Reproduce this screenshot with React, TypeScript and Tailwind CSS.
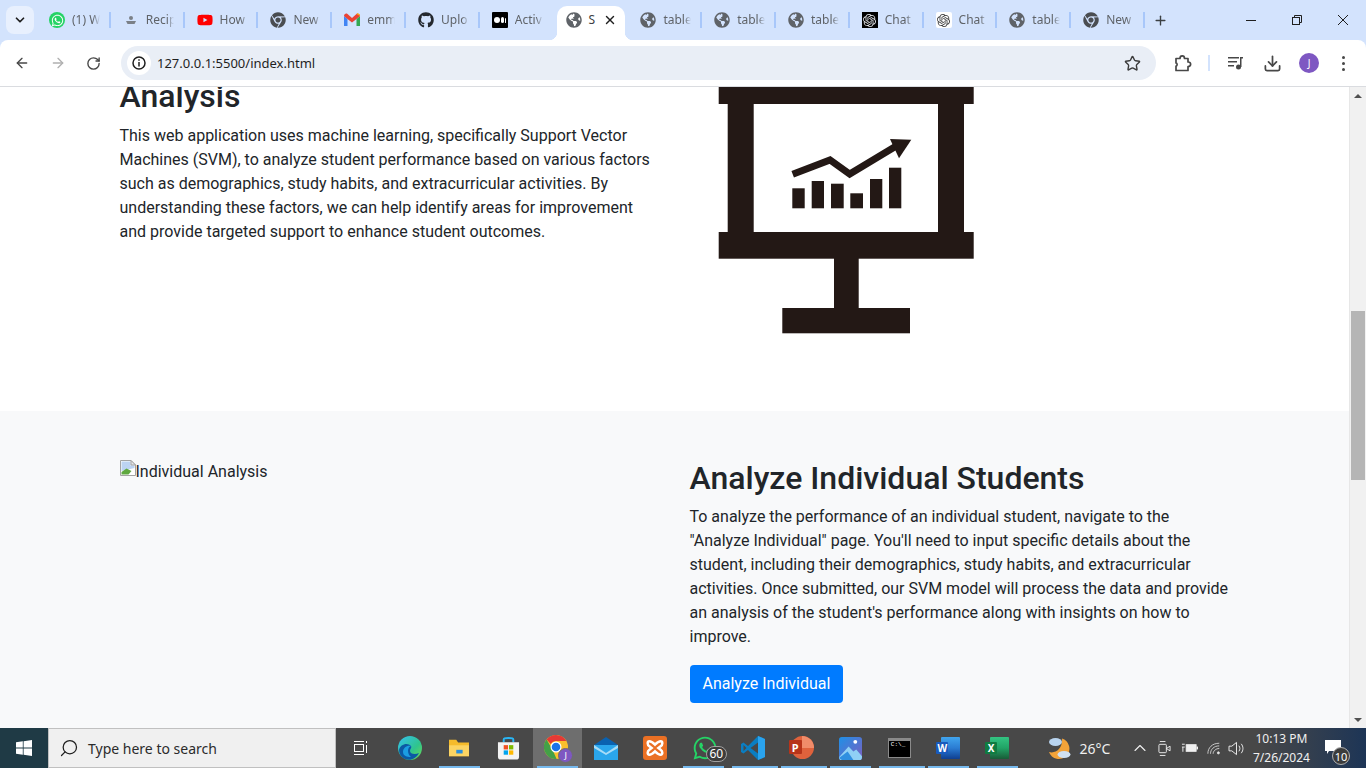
import * as React from 'react';
import { ArrowLeft, ArrowRight, RotateCw, Star, Download, Plus, X, ChevronDown, ChevronUp, Search } from 'lucide-react';
import { FaWhatsapp, FaChrome, FaGithub, FaYoutube, FaGlobeAmericas } from 'react-icons/fa';
import { SiOpenai } from 'react-icons/si';

const GmailIcon = () => (
  <svg viewBox="0 0 16 14" className="w-4 h-[14px]">
    <path d="M0 3v10h3.500V6z" fill="#4285f4" />
    <path d="M12.500 6v7H16V3z" fill="#34a853" />
    <path d="M0 3l3.500 3L8 9.500 12.500 6 16 3c0-2-2-3-3.500-2L8 5 3.500 1C2 0 0 1 0 3z" fill="#ea4335" />
    <path d="M12.500 1L16 3c0-2-2-3-3.500-2z" fill="#fbbc04" />
  </svg>
);

const RecipeIcon = () => (
  <svg viewBox="0 0 16 16" className="w-4 h-4">
    <circle cx="8" cy="6" r="2" fill="#7b8087" />
    <path d="M3 9h10l-1.500 3h-7z" fill="#7b8087" />
  </svg>
);

const WhatsappFavicon = () => (
  <span className="w-4 h-4 rounded-full bg-[#25d366] flex items-center justify-center">
    <FaWhatsapp className="w-[13px] h-[13px] text-white" />
  </span>
);

const MediumTile = () => (
  <span className="w-4 h-4 bg-black rounded-[1px] flex items-center justify-center gap-[1px]">
    <span className="w-[6px] h-[6px] rounded-full bg-white" />
    <span className="w-[3px] h-[6px] rounded-full bg-white" />
    <span className="w-[1px] h-[5px] rounded-full bg-white" />
  </span>
);

const OpenAiDark = () => (
  <span className="w-4 h-4 bg-black flex items-center justify-center">
    <SiOpenai className="w-[13px] h-[13px] text-[#e5e7eb]" />
  </span>
);

const OpenAiLight = () => (
  <span className="w-4 h-4 bg-white rounded-[2px] flex items-center justify-center">
    <SiOpenai className="w-[13px] h-[13px] text-[#3c3c3c]" />
  </span>
);

const Globe = () => <FaGlobeAmericas className="w-4 h-4 text-[#5f6368]" />;
const ChromeGrey = () => <FaChrome className="w-4 h-4 text-[#4a4d51]" />;

const TABS_LEFT = [
  { icon: <WhatsappFavicon />, title: '(1) W' },
  { icon: <RecipeIcon />, title: 'Recip' },
  { icon: <FaYoutube className="w-4 h-4 text-[#ff0000]" />, title: 'How' },
  { icon: <ChromeGrey />, title: 'New' },
  { icon: <GmailIcon />, title: 'emm' },
  { icon: <FaGithub className="w-4 h-4 text-[#24292f]" />, title: 'Uplo' },
  { icon: <MediumTile />, title: 'Activ', last: true },
];

const TABS_RIGHT = [
  { icon: <Globe />, title: 'table' },
  { icon: <Globe />, title: 'table' },
  { icon: <Globe />, title: 'table' },
  { icon: <OpenAiDark />, title: 'Chat' },
  { icon: <OpenAiLight />, title: 'Chat' },
  { icon: <Globe />, title: 'table' },
  { icon: <ChromeGrey />, title: 'New' },
];

function Tab({ icon, title, last }: { icon: React.ReactNode; title: string; last?: boolean }) {
  return (
    <div className="w-[73.8px] h-[30px] mt-[5px] flex items-center pl-[12px] shrink-0">
      <span className="w-4 h-4 flex items-center justify-center shrink-0">{icon}</span>
      <span className="ml-[7px] w-[28px] overflow-hidden whitespace-nowrap text-[12px] leading-[16px] text-[#5f6368] [mask-image:linear-gradient(to_right,black_75%,transparent)]">
        {title}
      </span>
      {!last && <span className="ml-auto w-[2px] h-[16px] bg-[#a8c7fa]" />}
    </div>
  );
}

function ActiveTab() {
  return (
    <div className="relative w-[74.8px] h-[34px] mt-[6px] px-[3px] shrink-0">
      <span className="absolute left-[-5px] bottom-0 w-2 h-2 bg-[radial-gradient(circle_at_0_0,transparent_8px,white_8.5px)]" />
      <span className="absolute right-[-5px] bottom-0 w-2 h-2 bg-[radial-gradient(circle_at_100%_0,transparent_8px,white_8.5px)]" />
      <div className="h-full bg-white rounded-t-[10px] flex items-center pl-[9px] pb-[6px]">
        <FaGlobeAmericas className="w-4 h-4 text-[#5f6368] shrink-0" />
        <span className="ml-[7px] w-[7px] text-[12px] leading-[16px] text-[#3c4043]">S</span>
        <X className="ml-[7px] w-[14px] h-[14px] text-[#1f1f1f]" strokeWidth={2.5} />
      </div>
    </div>
  );
}

function TabStrip() {
  return (
    <div className="h-[40px] bg-[#d3e3fd] flex pl-[6px] font-['Noto_Sans',sans-serif]">
      <div className="w-[28px] h-[28px] mt-[6px] mr-[3px] rounded-lg bg-[#e8f0fe] flex items-center justify-center">
        <ChevronDown className="w-[14px] h-[14px] text-[#1f1f1f]" strokeWidth={3} />
      </div>
      {TABS_LEFT.map((t, i) => (
        <Tab key={i} icon={t.icon} title={t.title} last={t.last} />
      ))}
      <ActiveTab />
      {TABS_RIGHT.map((t, i) => (
        <Tab key={i} icon={t.icon} title={t.title} />
      ))}
      <div className="ml-[8px] mt-[12px] w-4 h-4 flex items-center justify-center">
        <Plus className="w-[15px] h-[15px] text-[#3c4043]" strokeWidth={2.2} />
      </div>
      <div className="ml-auto flex h-[40px] text-[#1f1f1f]">
        <div className="w-[46px] flex items-center justify-center">
          <span className="w-[10px] h-px bg-[#1f1f1f]" />
        </div>
        <div className="w-[46px] flex items-center justify-center">
          <svg viewBox="0 0 10 10" className="w-[10px] h-[10px]" fill="none" stroke="#1f1f1f">
            <rect x="0.500" y="2.500" width="7" height="7" />
            <path d="M2.500 2.500V.5h7v7H7.500" />
          </svg>
        </div>
        <div className="w-[46px] flex items-center justify-center">
          <svg viewBox="0 0 10 10" className="w-[10px] h-[10px]" stroke="#1f1f1f">
            <path d="M0 0l10 10M10 0L0 10" />
          </svg>
        </div>
      </div>
    </div>
  );
}

function Toolbar() {
  return (
    <div className="h-[47px] bg-[#d3e3fd]">
      <div className="h-full bg-white rounded-t-lg border-b border-[#dadce0] flex items-center text-[#474747]">
        <div className="w-[121px] h-full flex items-center pl-[14px] gap-[20px]">
          <ArrowLeft className="w-4 h-4" strokeWidth={2} />
          <ArrowRight className="w-4 h-4 text-[#b0b0b0]" strokeWidth={2} />
          <RotateCw className="w-[15px] h-[15px]" strokeWidth={2.2} />
        </div>
        <div className="w-[1035px] h-[34px] rounded-full bg-[#e9eef6] flex items-center pl-[6px] pr-[15px]">
          <span className="w-[24px] h-[24px] rounded-full bg-white flex items-center justify-center">
            <svg viewBox="0 0 14 14" className="w-[14px] h-[14px]" fill="none" stroke="#1f1f1f" strokeWidth="1.500">
              <circle cx="7" cy="7" r="6" />
              <path d="M7 6v4.500M7 3.300v1.500" />
            </svg>
          </span>
          <span className="ml-[6px] mt-[2px] text-[13px] text-[#1f1f1f] font-['Noto_Sans',sans-serif]">127.0.0.1:5500/index.html</span>
          <Star className="ml-auto w-[17px] h-[17px] text-[#3c3c3c]" strokeWidth={2} />
        </div>
        <div className="flex items-center flex-1 h-full">
          <svg viewBox="0 0 18 18" className="ml-[18px] w-[18px] h-[18px]" fill="none" stroke="#474747" strokeWidth="1.700">
            <path d="M2 4.500h4c0-3.500 4.500-3.500 4.500 0H14v3.500c3.500 0 3.500 4.500 0 4.500V16.500H2v-4.500c1.500 0 1.500-3 0-3z" strokeLinejoin="round" />
          </svg>
          <span className="ml-[16px] w-[2px] h-[16px] bg-[#d3e3fd]" />
          <svg viewBox="0 0 16 14" className="ml-[18px] w-4 h-[14px]" fill="#474747">
            <rect x="0" y="1" width="11" height="1.500" />
            <rect x="0" y="5" width="9" height="1.500" />
            <rect x="0" y="9" width="6" height="1.500" />
            <circle cx="10.500" cy="11" r="2.500" />
            <rect x="12" y="1" width="3" height="1.500" />
            <rect x="12" y="1" width="1.500" height="10" />
          </svg>
          <Download className="ml-[19px] w-[19px] h-[19px] text-[#474747]" strokeWidth={2.2} />
          <span className="ml-[17px] w-[20px] h-[20px] rounded-full bg-[#7e57c2] text-white text-[10px] flex items-center justify-center font-['Noto_Sans',sans-serif]">
            J
          </span>
          <span className="ml-[23px] flex flex-col gap-[3px]">
            <span className="w-[3px] h-[3px] rounded-full bg-[#474747]" />
            <span className="w-[3px] h-[3px] rounded-full bg-[#474747]" />
            <span className="w-[3px] h-[3px] rounded-full bg-[#474747]" />
          </span>
        </div>
      </div>
    </div>
  );
}

// presentation board picture, coordinates taken straight from the page
function BoardPicture() {
  return (
    <svg viewBox="718 87 256 247" className="w-[256px] h-[247px] block" fill="#231815">
      <rect x="718.700" y="87" width="255" height="17" />
      <rect x="727.700" y="103" width="26" height="131" />
      <rect x="938" y="103" width="26" height="131" />
      <rect x="718.700" y="232" width="255" height="26.700" />
      <rect x="834" y="258" width="24.700" height="51" />
      <rect x="782.300" y="308" width="127.700" height="25.300" />
      <rect x="792.300" y="188.300" width="12.400" height="20" />
      <rect x="811.700" y="181" width="12.300" height="27.300" />
      <rect x="831" y="183.700" width="12.700" height="24.600" />
      <rect x="850.300" y="193.300" width="12.700" height="15" />
      <rect x="870" y="179" width="12.300" height="29.300" />
      <rect x="889" y="167.700" width="12.300" height="40.600" />
      <polyline points="792.700,174.300 830,160 849.700,174 895,146.700" fill="none" stroke="#231815" strokeWidth="7" />
      <polygon points="890,139 911.300,139.700 899,158.300" />
    </svg>
  );
}

function BrokenImage() {
  return (
    <svg viewBox="0 0 16 16" className="w-4 h-4 shrink-0 mt-[1px]">
      <path d="M.5.500h10.500l4.500 4.500v10.500H.5z" fill="#fff" stroke="#a3a3a3" />
      <path d="M1.500 1.500h9v4h4V8L1.500 11z" fill="#bcd3f2" />
      <path d="M1.500 14.500V12l5-3.500 5 2.500-3 3.500z" fill="#5fa83f" />
      <path d="M11 .5v4.500h4.500z" fill="#e5e7eb" stroke="#a3a3a3" />
    </svg>
  );
}

function Page() {
  return (
    <div className="flex-1 min-h-0 flex overflow-hidden">
      <main className="flex-1 min-w-0 overflow-hidden font-[Roboto,sans-serif] text-[#212529] text-[16px] leading-[24px]">
        <section className="bg-white h-[324px] overflow-hidden">
          <div className="w-[1140px] mx-auto px-[15px] flex">
            <div className="w-[540px] -mt-[10px]">
              <h2 className="text-[32px] leading-[38.4px] font-medium mb-[9px]">Analysis</h2>
              <p>
                This web application uses machine learning, specifically Support Vector Machines (SVM), to analyze
                student performance based on various factors such as demographics, study habits, and extracurricular
                activities. By understanding these factors, we can help identify areas for improvement and provide
                targeted support to enhance student outcomes.
              </p>
            </div>
            <div className="ml-[58.5px]">
              <BoardPicture />
            </div>
          </div>
        </section>
        <section className="bg-[#f8f9fa] h-[317px] pt-[48px]">
          <div className="w-[1140px] mx-auto px-[15px] flex">
            <div className="w-[540px] flex items-start">
              <BrokenImage />
              <span className="mt-[1px]">Individual Analysis</span>
            </div>
            <div className="w-[540px] ml-[30px]">
              <h2 className="text-[32px] leading-[38.4px] font-medium mb-2">Analyze Individual Students</h2>
              <p className="mb-4">
                To analyze the performance of an individual student, navigate to the "Analyze Individual" page. You'll
                need to input specific details about the student, including their demographics, study habits, and
                extracurricular activities. Once submitted, our SVM model will process the data and provide an analysis
                of the student's performance along with insights on how to improve.
              </p>
              <button className="h-[38px] px-[13px] rounded-[4px] bg-[#007bff] text-white">Analyze Individual</button>
            </div>
          </div>
        </section>
      </main>
      <div className="w-[17px] bg-[#f1f1f1] border-l border-[#e7e7e7] flex flex-col items-center">
        <div className="h-[17px] flex items-center justify-center">
          <span className="w-0 h-0 border-x-[4px] border-x-transparent border-b-[4px] border-b-[#505050]" />
        </div>
        <div className="w-[14px] h-[169px] mt-[207px] bg-[#b5b5b5]" />
        <div className="mt-auto h-[17px] flex items-center justify-center">
          <span className="w-0 h-0 border-x-[4px] border-x-transparent border-t-[4px] border-t-[#505050]" />
        </div>
      </div>
    </div>
  );
}

const EdgeIcon = () => (
  <svg viewBox="0 0 24 24" className="w-[24px] h-[24px]">
    <defs>
      <linearGradient id="edgeA" x1="0" y1="0" x2="1" y2="1">
        <stop offset="0" stopColor="#35c1f1" />
        <stop offset="0.600" stopColor="#2fc48d" />
        <stop offset="1" stopColor="#6fdc4f" />
      </linearGradient>
    </defs>
    <circle cx="12" cy="12" r="12" fill="url(#edgeA)" />
    <path d="M1 14c1-6 9-8 12-4 1 2-1 3-1 5 0 3 5 4 9 2-3 6-9 8-14 6-4-2-6-5-6-9z" fill="#0c59a4" />
    <path d="M5 16c0-4 4-7 8-6-4 1-4 8 0 11-4 0-8-1-8-5z" fill="#1b9de2" />
  </svg>
);

const FolderIcon = () => (
  <svg viewBox="0 0 24 22" className="w-[22px] h-[20px]">
    <path d="M1 2h8l2 3h12v15H1z" fill="#f5bb2b" />
    <path d="M1 8h22v12H1z" fill="#fcd462" />
    <path d="M9 13h7v4H9z" fill="#2a8fdc" />
  </svg>
);

const StoreIcon = () => (
  <svg viewBox="0 0 24 24" className="w-[23px] h-[24px]">
    <path d="M7 6V3c0-2 10-2 10 0v3" fill="none" stroke="#29b6f6" strokeWidth="2" />
    <path d="M1 6h22v15c0 2-1 3-3 3H4c-2 0-3-1-3-3z" fill="#f3f3f3" />
    <rect x="7" y="9" width="4.500" height="4.500" fill="#f25022" />
    <rect x="12.500" y="9" width="4.500" height="4.500" fill="#7fba00" />
    <rect x="7" y="14.500" width="4.500" height="4.500" fill="#00a4ef" />
    <rect x="12.500" y="14.500" width="4.500" height="4.500" fill="#ffb900" />
  </svg>
);

const ChromeIcon = () => (
  <div className="relative w-[26px] h-[26px]">
    <svg viewBox="0 0 24 24" className="w-[24px] h-[24px]">
      <circle cx="12" cy="12" r="12" fill="#fbc02d" />
      <path d="M12 0a12 12 0 0 1 10.400 6H12a6 6 0 0 0-5.200 3L2.600 4.500A12 12 0 0 1 12 0z" fill="#e53935" />
      <path d="M2.600 4.500l6 10.500 4 9A12 12 0 0 1 2.600 4.500z" fill="#43a047" />
      <circle cx="12" cy="12" r="5.500" fill="#fff" />
      <circle cx="12" cy="12" r="4.300" fill="#1a73e8" />
    </svg>
    <span className="absolute right-[-3px] bottom-[-2px] w-[15px] h-[15px] rounded-full bg-[#7e57c2] border border-[#6e6e6e] text-white text-[9px] leading-none flex items-center justify-center">
      J
    </span>
  </div>
);

const MailIcon = () => (
  <svg viewBox="0 0 24 24" className="w-[24px] h-[24px]">
    <path d="M12 1l12 8H0z" fill="#0a62b0" />
    <path d="M0 9h24v15H0z" fill="#2aa6ec" />
    <path d="M0 9l12 8 12-8v3l-12 7L0 12z" fill="#a8dcf7" />
  </svg>
);

const XamppIcon = () => (
  <div className="w-[24px] h-[24px] rounded-[3px] bg-[#ea7024] flex items-center justify-center">
    <svg viewBox="0 0 16 16" className="w-[18px] h-[18px]" fill="none" stroke="#fff" strokeWidth="2.200">
      <path d="M3 2c2 0 3 1 5 3 2-2 3-3 5-3s2 3 0 4.500L11 8l2 1.500c2 1.500 2 4.500 0 4.500s-3-1-5-3c-2 2-3 3-5 3s-2-3 0-4.500L5 8 3 6.500C1 5 1 2 3 2z" />
    </svg>
  </div>
);

const WhatsappIcon = () => (
  <div className="relative w-[24px] h-[24px]">
    <FaWhatsapp className="w-[26px] h-[26px] text-[#25d366] -mt-px" />
    <span className="absolute left-[14px] top-[10px] w-[21px] h-[16px] rounded-full bg-[#3c3c3c] border border-[#a0a0a0] text-white text-[12px] leading-none flex items-center justify-center">
      60
    </span>
  </div>
);

const VsCodeIcon = () => (
  <svg viewBox="0 0 24 24" className="w-[24px] h-[24px]">
    <path d="M17 0L7 10 2.500 6.500 0 8v8l2.500 1.500L7 14l10 10 7-3V3z" fill="#0a7ec2" />
    <path d="M17 0l7 3v18l-7 3z" fill="#2aa3ee" />
    <path d="M17 6.500L9.500 12l7.500 5.500z" fill="#484848" />
    <path d="M2.500 9v6l3-3z" fill="#484848" />
  </svg>
);

const PowerPointIcon = () => (
  <div className="relative w-[24px] h-[24px]">
    <span className="absolute left-[1px] top-0 w-[23px] h-[23px] rounded-full bg-[#e0623c]" />
    <span className="absolute left-[12px] top-0 w-[12px] h-[12px] rounded-tr-full bg-[#f08c6a]" />
    <span className="absolute left-[-1px] top-[4px] w-[13px] h-[14px] rounded-[1px] bg-[#b7341a] text-white text-[11px] font-bold leading-none flex items-center justify-center">
      P
    </span>
  </div>
);

const PhotosIcon = () => (
  <svg viewBox="0 0 24 24" className="w-[23px] h-[23px]">
    <defs>
      <linearGradient id="photoA" x1="0" y1="0" x2="1" y2="1">
        <stop offset="0" stopColor="#1e90e6" />
        <stop offset="1" stopColor="#7d5fc0" />
      </linearGradient>
    </defs>
    <rect width="24" height="24" rx="3" fill="url(#photoA)" />
    <path d="M0 21l10-11 5 5 3-2 6 7v1a3 3 0 0 1-3 3H3a3 3 0 0 1-3-3z" fill="#8fd0f5" />
    <path d="M0 22l9-7 6 9H3z" fill="#2f8fe0" />
    <circle cx="17" cy="5" r="2" fill="#fff" />
  </svg>
);

const CmdIcon = () => (
  <div className="w-[23px] h-[20px] bg-black border border-[#8a8a8a] border-t-[3px] flex flex-col justify-start pl-[2px] pt-[1px] text-white text-[6px] leading-none font-['Liberation_Mono',monospace]">
    C:\_
  </div>
);

const WordIcon = () => (
  <div className="relative w-[24px] h-[22px]">
    <span className="absolute left-[5px] top-0 w-[19px] h-[22px] rounded-[1px] bg-gradient-to-b from-[#41a5ee] via-[#2b7cd3] to-[#103f91]" />
    <span className="absolute left-0 top-[5px] w-[12px] h-[12px] rounded-[1px] bg-[#185abd] text-white text-[10px] font-bold leading-none flex items-center justify-center">
      W
    </span>
  </div>
);

const ExcelIcon = () => (
  <div className="relative w-[24px] h-[22px]">
    <span className="absolute left-[5px] top-0 w-[19px] h-[22px] rounded-[1px] bg-gradient-to-b from-[#33c481] via-[#21a366] to-[#185c37]" />
    <span className="absolute left-0 top-[5px] w-[12px] h-[12px] rounded-[1px] bg-[#107c41] text-white text-[10px] font-bold leading-none flex items-center justify-center">
      X
    </span>
  </div>
);

const TASK_APPS: { icon: React.ReactNode; running?: boolean; active?: boolean; stack?: boolean }[] = [
  { icon: <EdgeIcon /> },
  { icon: <FolderIcon />, running: true },
  { icon: <StoreIcon /> },
  { icon: <ChromeIcon />, running: true, active: true },
  { icon: <MailIcon /> },
  { icon: <XamppIcon /> },
  { icon: <WhatsappIcon />, running: true },
  { icon: <VsCodeIcon />, running: true, stack: true },
  { icon: <PowerPointIcon />, running: true, stack: true },
  { icon: <PhotosIcon />, running: true },
  { icon: <CmdIcon />, running: true, stack: true },
  { icon: <WordIcon />, running: true },
  { icon: <ExcelIcon />, running: true },
];

function TaskButton({ icon, running, active, stack }: { icon: React.ReactNode; running?: boolean; active?: boolean; stack?: boolean }) {
  return (
    <div className={`relative w-[48.900px] h-full flex items-center justify-center shrink-0 ${active ? 'bg-[#6e6e6e]' : ''}`}>
      {icon}
      {running && <span className={`absolute bottom-0 left-[4px] h-[2px] bg-[#76b9ed] ${stack ? 'right-[-1px]' : 'right-[4px]'}`} />}
    </div>
  );
}

function Taskbar() {
  return (
    <div className="h-[40px] flex bg-[linear-gradient(to_right,#484848_0%,#484848_92%,#1d3556_100%)] text-white font-['Noto_Sans',sans-serif]">
      <div className="w-[48px] bg-[#1f3a45] flex items-center justify-center">
        <svg viewBox="0 0 16 16" className="w-4 h-4" fill="#fff">
          <path d="M0 2.300l6.800-1v6.300H0zM7.600 1.200L16 0v7.600H7.600zM0 8.400h6.800v6.300l-6.800-1zM7.600 8.400H16V16l-8.400-1.200z" />
        </svg>
      </div>
      <div className="w-[288px] bg-[#f0f0f0] border border-[#c0c0c0] flex items-center pl-[10px] text-[#333]">
        <Search className="w-[20px] h-[20px] -scale-x-100 text-[#1f1f1f]" strokeWidth={1.500} />
        <span className="ml-[9px] text-[14px] text-[#2b2b2b]">Type here to search</span>
      </div>
      <div className="w-[50px] flex items-center justify-center">
        <svg viewBox="0 0 16 16" className="w-4 h-4" fill="none" stroke="#fff">
          <rect x="1.500" y="4.500" width="9" height="7" />
          <path d="M1 1.500h10M1 14.500h10M13.500 1v2M13.500 5v8" />
        </svg>
      </div>
      {TASK_APPS.map((a, i) => (
        <TaskButton key={i} {...a} />
      ))}
      <div className="ml-[26px] w-[26px] flex items-center justify-center">
        <svg viewBox="0 0 26 24" className="w-[26px] h-[24px]">
          <path d="M14 2.500a10.500 10.500 0 1 1-13 13.500c7 2 14-4 13-13.500z" fill="#f2a33a" />
          <ellipse cx="7.500" cy="6" rx="6.500" ry="4" fill="#b9d4ef" />
          <ellipse cx="16" cy="18.500" rx="6.500" ry="3.500" fill="#cfe0f2" />
        </svg>
      </div>
      <span className="ml-[6px] self-center text-[14px] text-[#f0f0f0]">26°C</span>
      <ChevronUp className="ml-[20px] self-center w-[20px] h-[20px] text-[#f0f0f0]" strokeWidth={1.300} />
      <svg viewBox="0 0 14 18" className="ml-[8px] self-center w-[13px] h-[17px]" fill="none" stroke="#f0f0f0">
        <path d="M2 1.500h6M2 16.500h6" />
        <rect x="1" y="4.500" width="8" height="9" rx="1" />
        <path d="M9 9l4-2.500v5z" />
      </svg>
      <svg viewBox="0 0 18 12" className="ml-[10px] self-center w-[17px] h-[12px]">
        <path d="M1 2h3M1 5h3M2 5v5" stroke="#f0f0f0" fill="none" />
        <rect x="5.500" y="2.500" width="10.500" height="7" fill="#f0f0f0" stroke="#f0f0f0" />
        <rect x="16.500" y="4.500" width="1.500" height="3" fill="#f0f0f0" />
      </svg>
      <svg viewBox="0 0 16 14" className="ml-[9px] self-center w-[14px] h-[13px]" fill="none" stroke="#d8d8d8">
        <path d="M1 13C1 6 6 1 14 1M4 13c0-5 4-9 10-9M7 13c0-3 3-6 7-6" />
        <circle cx="13" cy="12" r="1.200" fill="#f0f0f0" />
      </svg>
      <svg viewBox="0 0 18 16" className="ml-[7px] self-center w-[17px] h-[15px]" fill="none" stroke="#f0f0f0">
        <path d="M1 5.500h3L9 1.500v13l-5-4H1z" />
        <path d="M11.500 5c1.500 2 1.500 4 0 6M14 3c2.500 3 2.500 7 0 10" />
      </svg>
      <div className="ml-[2px] w-[68px] flex flex-col items-center justify-center text-[12px] leading-[19px] text-[#f0f0f0]">
        <span>10:13 PM</span>
        <span>7/26/2024</span>
      </div>
      <div className="relative ml-auto mr-[19px] w-[22px] self-center h-[24px]">
        <svg viewBox="0 0 16 14" className="absolute left-0 top-[4px] w-[16px] h-[14px]" fill="#fff">
          <path d="M0 0h16v11H4l-2 3v-3H0z" />
        </svg>
        <span className="absolute left-[7px] top-[11px] w-[18px] h-[18px] rounded-full bg-[#3c3c3c] border border-[#b0b0b0] text-white text-[11px] leading-none flex items-center justify-center">
          10
        </span>
      </div>
    </div>
  );
}

export default function App() {
  return (
    <div className="w-full h-screen flex flex-col overflow-hidden">
      <TabStrip />
      <Toolbar />
      <Page />
      <Taskbar />
    </div>
  );
}
